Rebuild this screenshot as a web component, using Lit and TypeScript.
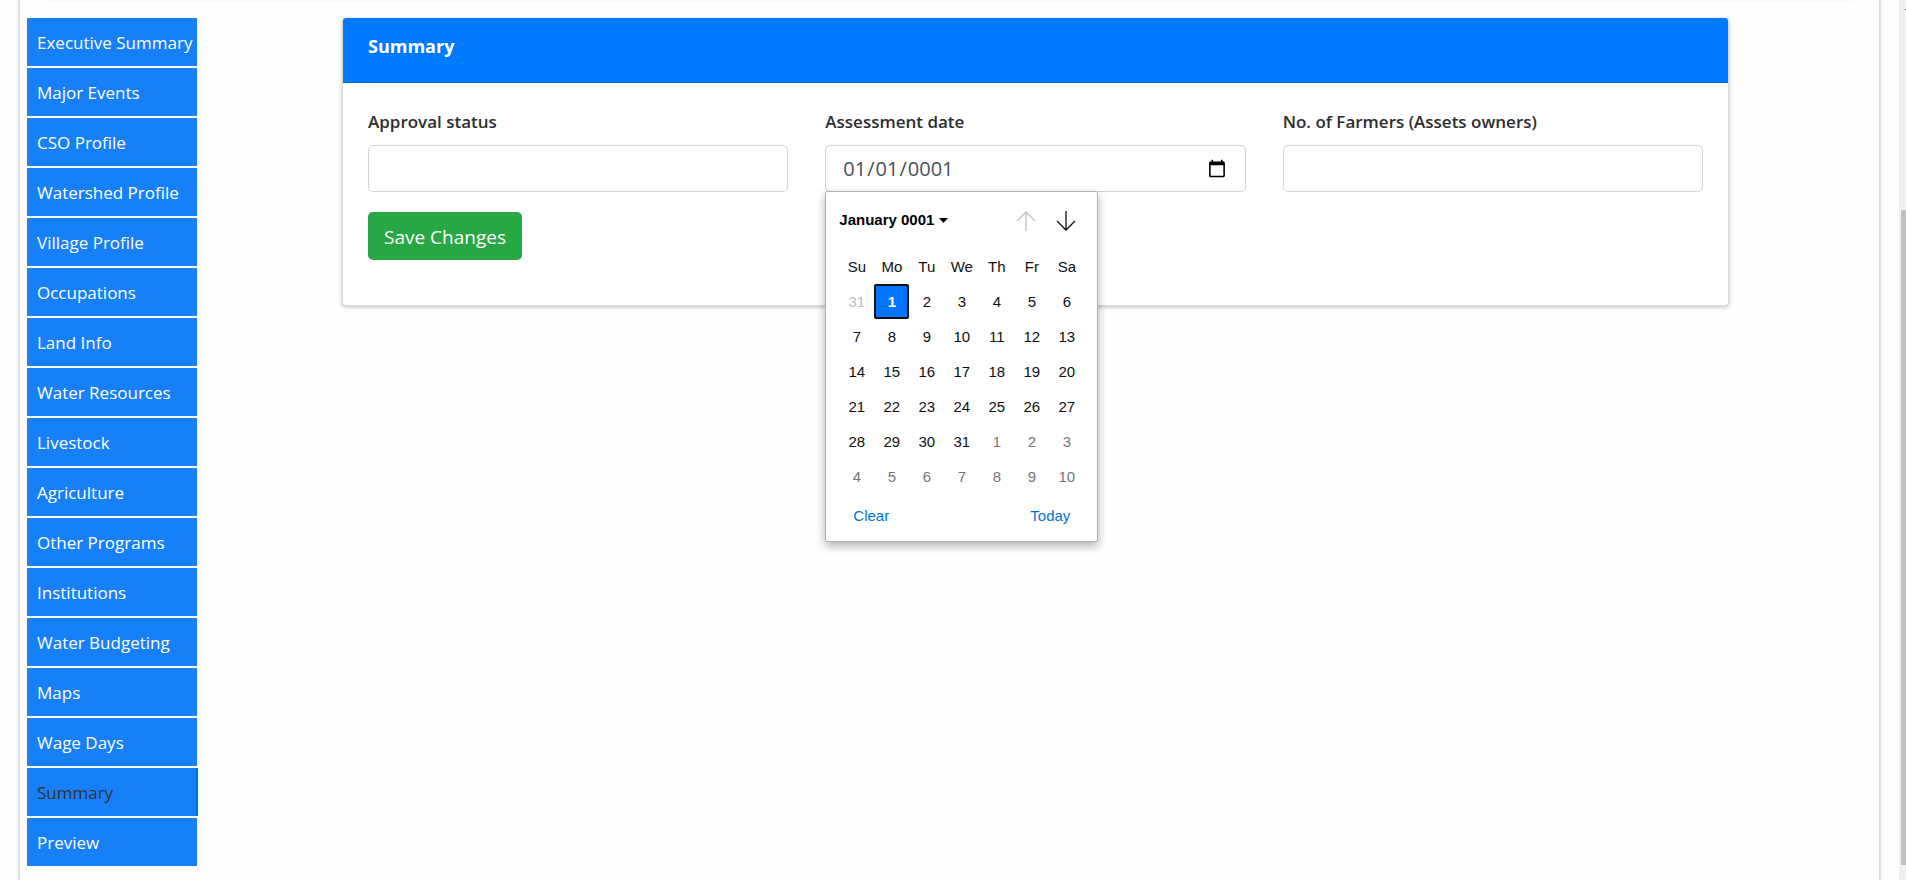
import { LitElement, html, css } from 'lit';
import { customElement, property } from 'lit/decorators.js';
import { classMap } from 'lit/directives/class-map.js';

const SECTIONS = [
  'Executive Summary',
  'Major Events',
  'CSO Profile',
  'Watershed Profile',
  'Village Profile',
  'Occupations',
  'Land Info',
  'Water Resources',
  'Livestock',
  'Agriculture',
  'Other Programs',
  'Institutions',
  'Water Budgeting',
  'Maps',
  'Wage Days',
  'Summary',
  'Preview',
];

const WEEKDAYS = ['Su', 'Mo', 'Tu', 'We', 'Th', 'Fr', 'Sa'];

interface Day {
  label: number;
  state: 'before' | 'current' | 'after';
}

// six weeks, starting on the Sunday on or before the first of the month
function buildWeeks(offset: number, length: number, previousLength: number): Day[][] {
  const days = Array.from({ length: 42 }, (_, i): Day => {
    const n = i - offset + 1;
    if (n < 1) return { label: previousLength + n, state: 'before' };
    if (n > length) return { label: n - length, state: 'after' };
    return { label: n, state: 'current' };
  });
  return Array.from({ length: 6 }, (_, w) => days.slice(w * 7, w * 7 + 7));
}

@customElement('calendar-popup')
export class CalendarPopup extends LitElement {
  static styles = css`
    :host {
      display: block;
      box-sizing: border-box;
      padding: 12px 11px 12px 13px;
      border: 1px solid #b0b0b0;
      border-radius: 2px;
      background: #fff;
      box-shadow: 0 4px 10px rgba(0, 0, 0, 0.3);
      color: #101010;
      font: 15px/20px 'Liberation Sans', Arial, sans-serif;
    }
    button {
      padding: 0;
      border: 0;
      background: none;
      color: inherit;
      font: inherit;
      cursor: pointer;
    }
    .header {
      display: flex;
      align-items: center;
      height: 34px;
    }
    .month {
      display: flex;
      align-items: center;
      gap: 5px;
      margin-right: auto;
      padding-bottom: 2px;
      color: #000;
      font-weight: bold;
    }
    .step {
      display: flex;
      justify-content: center;
      width: 40px;
    }
    .step:disabled {
      color: #c0c0c0;
    }
    .days {
      margin-top: 11px;
      border-collapse: collapse;
    }
    th,
    td {
      width: 35px;
      height: 35px;
      padding: 0;
      font-weight: normal;
      text-align: center;
    }
    .day {
      box-sizing: border-box;
      display: block;
      width: 35px;
      height: 35px;
    }
    .before {
      color: #c0c0c0;
    }
    .after {
      color: #767676;
    }
    .selected {
      border: 2px solid #101010;
      border-radius: 2px;
      background: #0075ff;
      color: #fff;
      font-weight: bold;
    }
    .actions {
      display: flex;
      justify-content: space-between;
      padding: 12px 16px 3px 14px;
      color: #0075d7;
    }
  `;

  @property({ type: Number }) selected = 1;

  render() {
    return html`
      <div class="header">
        <button class="month" type="button">
          January 0001
          <svg width="9" height="5" viewBox="0 0 9 5" aria-hidden="true">
            <path d="M0 0h9L4.5 5z" fill="currentColor" />
          </svg>
        </button>
        <button class="step" type="button" aria-label="Previous month" disabled>
          <svg width="20" height="20" viewBox="0 0 20 20" fill="none" stroke="currentColor" stroke-width="1.3">
            <path d="M10 20V1M1 10l9-9 9 9" />
          </svg>
        </button>
        <button class="step" type="button" aria-label="Next month">
          <svg width="20" height="20" viewBox="0 0 20 20" fill="none" stroke="currentColor" stroke-width="1.3">
            <path d="M10 0v19M1 10l9 9 9-9" />
          </svg>
        </button>
      </div>
      <table class="days">
        <thead>
          <tr>
            ${WEEKDAYS.map((name) => html`<th scope="col">${name}</th>`)}
          </tr>
        </thead>
        <tbody>
          ${buildWeeks(1, 31, 31).map(
            (week) => html`<tr>
              ${week.map((day) => html`<td>${this.renderDay(day)}</td>`)}
            </tr>`
          )}
        </tbody>
      </table>
      <div class="actions">
        <button type="button">Clear</button>
        <button type="button">Today</button>
      </div>
    `;
  }

  renderDay(day: Day) {
    const classes = {
      day: true,
      [day.state]: true,
      selected: day.state === 'current' && day.label === this.selected,
    };
    return html`<button type="button" class=${classMap(classes)} ?disabled=${day.state === 'before'}>
      ${day.label}
    </button>`;
  }
}

@customElement('app-root')
export class AppRoot extends LitElement {
  static styles = css`
    :host {
      display: flex;
      min-height: 100vh;
      background: #fefefe;
      color: #2d2d2d;
      font: 17px/24px 'Open Sans', 'Segoe UI', sans-serif;
    }
    .page {
      flex: 1;
      display: flex;
      flex-direction: column;
      margin: 0 19px;
      border: 1px solid #dcdcdc;
      border-width: 0 1px;
      box-shadow: 0 0 0 1px #e2e2e2, 0 0 4px rgba(0, 0, 0, 0.2);
    }
    .divider {
      height: 2px;
      margin: 0 26px 16px;
      background: linear-gradient(#f6f6f6, #fdfdfd);
    }
    .content {
      display: flex;
      align-items: flex-start;
      padding: 0 0 14px 7px;
    }
    .sections {
      display: flex;
      flex-direction: column;
      gap: 2px;
      width: 170px;
    }
    .section {
      padding: 13px 0 11px 10px;
      background: #1780f7;
      color: #fff;
      text-decoration: none;
      white-space: nowrap;
    }
    .section.active {
      box-shadow: 1px 0 #0075d8, inset -1px 0 #0075d8;
      color: #333;
    }
    .main {
      flex: 1;
      padding: 0 150px 0 145px;
    }
    .card {
      border: 1px solid #dadada;
      border-top: 0;
      border-radius: 4px;
      background: #fff;
      box-shadow: 0 1px 4px rgba(0, 0, 0, 0.25);
    }
    .card-title {
      margin: 0;
      padding: 16px 25px 24px;
      border-bottom: 1px solid #0069d9;
      border-radius: 3px 3px 0 0;
      background: #007bff;
      color: #fff;
      font-size: 18px;
      line-height: 24px;
      font-weight: 700;
    }
    .form {
      padding: 27px 25px 45px;
    }
    .fields {
      display: grid;
      grid-template-columns: repeat(3, 1fr);
      gap: 37px;
      margin-bottom: 20px;
    }
    .field {
      position: relative;
    }
    .label {
      display: block;
      margin-bottom: 11px;
      font-weight: 600;
    }
    .input {
      box-sizing: border-box;
      display: block;
      width: 100%;
      height: 47px;
      padding: 6px 16px;
      border: 1px solid #ced4da;
      border-radius: 5px;
      background: #fff;
      color: #495057;
      font: 20px/30px 'Open Sans', 'Segoe UI', sans-serif;
    }
    .calendar {
      position: absolute;
      top: calc(100% - 1px);
      left: 0;
      z-index: 1;
      width: 273px;
    }
    .save {
      padding: 10px 16px 8px;
      border: 0;
      border-radius: 5px;
      background: #28a745;
      color: #fff;
      font: 19px/30px 'Open Sans', 'Segoe UI', sans-serif;
    }
    .scrollbar {
      display: flex;
      flex-direction: column;
      align-items: flex-end;
      width: 7px;
      background: #f1f1f1;
    }
    .arrow {
      width: 1px;
      height: 1px;
      margin: 9px 0 200px;
      background: #505050;
    }
    .thumb {
      flex: 1;
      width: 5px;
      margin-bottom: 15px;
      background: #c1c1c1;
    }
  `;

  @property() active = 'Summary';

  render() {
    return html`
      <div class="page">
        <div class="divider"></div>
        <div class="content">
          <nav class="sections">
            ${SECTIONS.map(
              (name) => html`<a
                href="#"
                class=${classMap({ section: true, active: name === this.active })}
                >${name}</a
              >`
            )}
          </nav>
          <main class="main">
            <section class="card">
              <h1 class="card-title">Summary</h1>
              <form class="form">
                <div class="fields">
                  <div class="field">
                    <label class="label" for="status">Approval status</label>
                    <input class="input" id="status" type="text" />
                  </div>
                  <div class="field">
                    <label class="label" for="date">Assessment date</label>
                    <input class="input" id="date" type="date" value="0001-01-01" />
                    <calendar-popup class="calendar"></calendar-popup>
                  </div>
                  <div class="field">
                    <label class="label" for="farmers">No. of Farmers (Assets owners)</label>
                    <input class="input" id="farmers" type="text" />
                  </div>
                </div>
                <button class="save" type="button">Save Changes</button>
              </form>
            </section>
          </main>
        </div>
      </div>
      <div class="scrollbar">
        <div class="arrow"></div>
        <div class="thumb"></div>
      </div>
    `;
  }
}
